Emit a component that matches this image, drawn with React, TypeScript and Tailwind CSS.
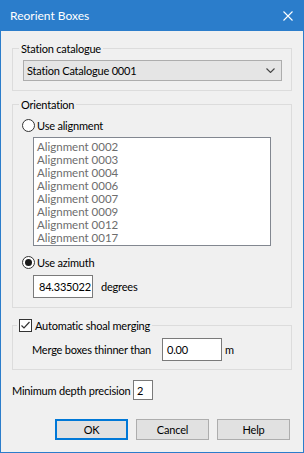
import React from "react";

const ALIGNMENTS = [
  "Alignment 0002",
  "Alignment 0003",
  "Alignment 0004",
  "Alignment 0006",
  "Alignment 0007",
  "Alignment 0009",
  "Alignment 0012",
  "Alignment 0017",
];

function Radio({ checked }: { checked?: boolean }) {
  return (
    <span className="w-[13px] h-[13px] rounded-full border border-[#333333] bg-white flex items-center justify-center shrink-0">
      {checked && <span className="w-[7px] h-[7px] rounded-full bg-[#1a1a1a]" />}
    </span>
  );
}

function Checkbox() {
  return (
    <span className="w-[13px] h-[13px] border border-[#333333] bg-white flex items-center justify-center shrink-0">
      <svg width="11" height="11" viewBox="0 0 11 11">
        <path d="M1.5 5.5 L4 8 L9.5 2" fill="none" stroke="#333333" strokeWidth="1.2" />
      </svg>
    </span>
  );
}

function Button({ label, primary }: { label: string; primary?: boolean }) {
  return (
    <button
      className={
        primary
          ? "w-[73px] h-[21px] bg-[#e1e1e1] border-2 border-[#0078d7] leading-[15px]"
          : "w-[73px] h-[21px] bg-[#e1e1e1] border border-[#adadad] leading-[15px]"
      }
    >
      {label}
    </button>
  );
}

export default function App() {
  return (
    <div
      className="w-[304px] h-[453px] bg-[#2b7dcb] flex flex-col text-black text-[11px] leading-[15px] tracking-[-0.2px] whitespace-nowrap"
      style={{ fontFamily: 'Lato, "Segoe UI", sans-serif' }}
    >
      <div className="h-[31px] flex items-center justify-between pl-[10px] pr-[11px] text-white">
        <span className="text-[12px] tracking-normal">Reorient Boxes</span>
        <svg width="10" height="10" viewBox="0 0 10 10">
          <path d="M0.5 0.5 L9.5 9.5 M9.5 0.5 L0.5 9.5" stroke="white" strokeWidth="1.1" />
        </svg>
      </div>

      <div className="mx-[1px] mb-[1px] flex-1 bg-[#f0f0f0] pl-[11px] pr-[13px] flex flex-col">
        <fieldset className="mt-[10px] w-[280px] border border-[#dcdcdc]">
          <legend className="ml-[6px] px-[2px] h-[15px]">Station catalogue</legend>
          <div className="pt-[4px] pb-[9px] pl-[10px]">
            <div className="w-[259px] h-[21px] bg-[#e5e5e5] border border-[#adadad] flex items-center justify-between pl-[3px] pr-[6px]">
              <span>Station Catalogue 0001</span>
              <svg width="9" height="5" viewBox="0 0 9 5">
                <path d="M0.5 0.5 L4.5 4.5 L8.5 0.5" fill="none" stroke="#444444" strokeWidth="1.1" />
              </svg>
            </div>
          </div>
        </fieldset>

        <fieldset className="mt-[6px] w-[280px] border border-[#dcdcdc]">
          <legend className="ml-[6px] px-[2px] h-[15px]">Orientation</legend>
          <div className="pt-[6px] pb-[9px] pl-[9px] flex flex-col">
            <div className="h-[15px] flex items-center gap-[2px]">
              <Radio />
              <span>Use alignment</span>
            </div>
            <div className="mt-[4px] ml-[11px] w-[238px] h-[109px] bg-white border border-[#828790] pt-[2px] pl-[3px] text-[#6d6d6d] text-[11.5px] tracking-normal">
              {ALIGNMENTS.map((name) => (
                <div key={name} className="h-[13px] leading-[13px]">
                  {name}
                </div>
              ))}
            </div>
            <div className="mt-[9px] h-[15px] flex items-center gap-[2px]">
              <Radio checked />
              <span>Use azimuth</span>
            </div>
            <div className="mt-[5px] ml-[11px] flex items-center">
              <div className="w-[60px] h-[23px] bg-white border border-[#7a7a7a] flex items-center pl-[5px]">
                84.335022
              </div>
              <span className="ml-[8px]">degrees</span>
            </div>
          </div>
        </fieldset>

        <fieldset className="mt-[10px] w-[280px] border border-[#dcdcdc]">
          <legend className="ml-[4px] pl-[2px] pr-[2px] h-[15px]">
            <span className="flex items-center gap-[3px]">
              <Checkbox />
              <span>Automatic shoal merging</span>
            </span>
          </legend>
          <div className="pt-[5px] pb-[8px] pl-[19px] flex items-center">
            <span className="w-[130px]">Merge boxes thinner than</span>
            <div className="w-[60px] h-[23px] bg-white border border-[#7a7a7a] flex items-center pl-[4px]">
              0.00
            </div>
            <span className="ml-[3px]">m</span>
          </div>
        </fieldset>

        <div className="mt-[10px] flex items-center">
          <span className="w-[121px]">Minimum depth precision</span>
          <div className="w-[20px] h-[20px] bg-white border border-[#7a7a7a] flex items-center pl-[3px]">
            2
          </div>
        </div>

        <div className="mt-[19px] flex justify-end gap-[8px] pr-[0px]">
          <Button label="OK" primary />
          <Button label="Cancel" />
          <Button label="Help" />
        </div>
      </div>
    </div>
  );
}
